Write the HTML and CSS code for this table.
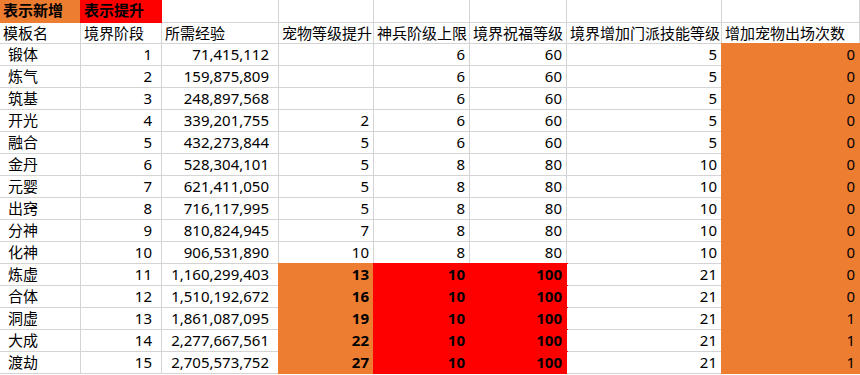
FILE: index.html
```
<!DOCTYPE html>
<html lang="zh-CN">
<head>
<meta charset="utf-8">
<title>境界</title>
<link rel="stylesheet" href="styles.css">
</head>
<body>
<table class="sheet">
<tbody>
<tr class="r1"><td class="t b or">表示新增</td><td class="t b rd">表示提升</td><td></td><td></td><td></td><td></td><td></td><td></td></tr>
<tr class="r2"><td class="t">模板名</td><td class="t">境界阶段</td><td class="t">所需经验</td><td class="t">宠物等级提升</td><td class="t">神兵阶级上限</td><td class="t">境界祝福等级</td><td class="t">境界增加门派技能等级</td><td class="t">增加宠物出场次数</td></tr>
<tr><td class="nm">锻体</td><td class="n9">1</td><td class="n9">71,415,112</td><td></td><td class="n">6</td><td class="n">60</td><td class="n">5</td><td class="n or">0</td></tr>
<tr><td class="nm">炼气</td><td class="n9">2</td><td class="n9">159,875,809</td><td></td><td class="n">6</td><td class="n">60</td><td class="n">5</td><td class="n or">0</td></tr>
<tr><td class="nm">筑基</td><td class="n9">3</td><td class="n9">248,897,568</td><td></td><td class="n">6</td><td class="n">60</td><td class="n">5</td><td class="n or">0</td></tr>
<tr><td class="nm">开光</td><td class="n9">4</td><td class="n9">339,201,755</td><td class="n">2</td><td class="n">6</td><td class="n">60</td><td class="n">5</td><td class="n or">0</td></tr>
<tr><td class="nm">融合</td><td class="n9">5</td><td class="n9">432,273,844</td><td class="n">5</td><td class="n">6</td><td class="n">60</td><td class="n">5</td><td class="n or">0</td></tr>
<tr><td class="nm">金丹</td><td class="n9">6</td><td class="n9">528,304,101</td><td class="n">5</td><td class="n">8</td><td class="n">80</td><td class="n">10</td><td class="n or">0</td></tr>
<tr><td class="nm">元婴</td><td class="n9">7</td><td class="n9">621,411,050</td><td class="n">5</td><td class="n">8</td><td class="n">80</td><td class="n">10</td><td class="n or">0</td></tr>
<tr><td class="nm">出窍</td><td class="n9">8</td><td class="n9">716,117,995</td><td class="n">5</td><td class="n">8</td><td class="n">80</td><td class="n">10</td><td class="n or">0</td></tr>
<tr><td class="nm">分神</td><td class="n9">9</td><td class="n9">810,824,945</td><td class="n">7</td><td class="n">8</td><td class="n">80</td><td class="n">10</td><td class="n or">0</td></tr>
<tr><td class="nm">化神</td><td class="n9">10</td><td class="n9">906,531,890</td><td class="n">10</td><td class="n">8</td><td class="n">80</td><td class="n">10</td><td class="n or">0</td></tr>
<tr><td class="nm">炼虚</td><td class="n9">11</td><td class="n9">1,160,299,403</td><td class="n b or">13</td><td class="n b rd">10</td><td class="n b rd">100</td><td class="n">21</td><td class="n or">0</td></tr>
<tr><td class="nm">合体</td><td class="n9">12</td><td class="n9">1,510,192,672</td><td class="n b or">16</td><td class="n b rd">10</td><td class="n b rd">100</td><td class="n">21</td><td class="n or">0</td></tr>
<tr><td class="nm">洞虚</td><td class="n9">13</td><td class="n9">1,861,087,095</td><td class="n b or">19</td><td class="n b rd">10</td><td class="n b rd">100</td><td class="n">21</td><td class="n or">1</td></tr>
<tr><td class="nm">大成</td><td class="n9">14</td><td class="n9">2,277,667,561</td><td class="n b or">22</td><td class="n b rd">10</td><td class="n b rd">100</td><td class="n">21</td><td class="n or">1</td></tr>
<tr><td class="nm">渡劫</td><td class="n9">15</td><td class="n9">2,705,573,752</td><td class="n b or">27</td><td class="n b rd">10</td><td class="n b rd">100</td><td class="n">21</td><td class="n or">1</td></tr>
</tbody>
</table>
</body>
</html>
```

FILE: styles.css
```
html, body {
  margin: 0;
  padding: 0;
  background: #ffffff;
  overflow: hidden;
}

.sheet {
  display: grid;
  grid-template-columns: 81px 81px 117px 95px 96px 97px 155px 138px;
  grid-template-rows: 23px 21px;
  grid-auto-rows: 22px;
  border-collapse: separate;
  border-spacing: 0;
  font-family: "Noto Sans", "Noto Sans CJK SC", sans-serif;
  font-size: 15px;
  color: #000000;
}

.sheet tbody,
.sheet tr {
  display: contents;
}

.sheet td {
  display: block;
  box-sizing: border-box;
  background: #ffffff;
  border-right: 1px solid #d4d4d4;
  border-bottom: 1px solid #d4d4d4;
  line-height: 21px;
  padding: 0;
  white-space: nowrap;
  overflow: hidden;
}

.sheet .t {
  text-align: left;
  padding-left: 3px;
}

.sheet .nm {
  text-align: left;
  padding-left: 8px;
}

.sheet .n {
  text-align: right;
  padding-right: 4px;
}

.sheet .n9 {
  text-align: right;
  padding-right: 9px;
}

.sheet .b {
  font-weight: 700;
}

.sheet .or {
  background: #ed7d31;
  border-color: #ed7d31;
  box-shadow: 0 0 0 1px #ed7d31;
}

.sheet .rd {
  background: #ff0000;
  border-color: #ff0000;
  box-shadow: 0 0 0 1px #ff0000;
}
```
